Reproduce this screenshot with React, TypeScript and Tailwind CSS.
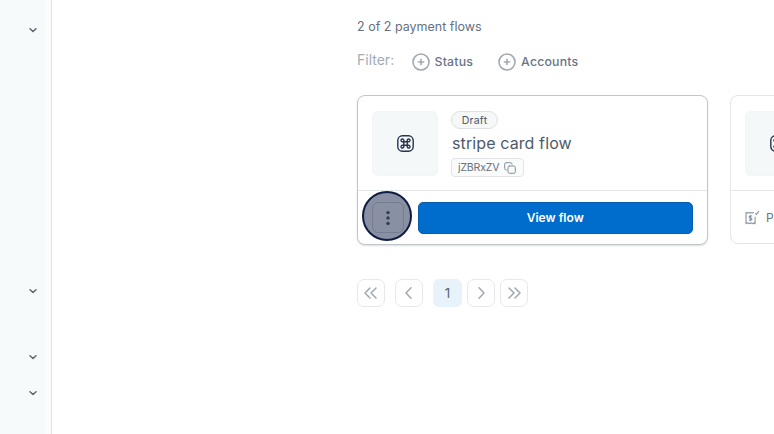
import type { ReactNode } from "react";

const stroke = {
  fill: "none",
  stroke: "currentColor",
  strokeLinecap: "round" as const,
  strokeLinejoin: "round" as const,
};

function SideChevron() {
  return (
    <svg className="block h-3 w-3 text-[#5d646b]" viewBox="0 0 12 12" {...stroke} strokeWidth={1.5}>
      <path d="M3 4.8 6 7.5 9 4.8" />
    </svg>
  );
}

function Sidebar() {
  return (
    <aside className="flex w-[52px] shrink-0 border-r border-[#dde3e6] bg-[#fbfdfd]">
      <nav className="flex w-[45px] flex-col items-end bg-[#f6fafb] pt-6 pr-[6px]">
        <SideChevron />
        <div className="mt-[249px]"><SideChevron /></div>
        <div className="mt-[54px]"><SideChevron /></div>
        <div className="mt-6"><SideChevron /></div>
      </nav>
    </aside>
  );
}

function FilterButton({ children }: { children: ReactNode }) {
  return (
    <button className="flex items-center gap-1 text-[12.3px] leading-5 font-medium tracking-[0.2px] text-[#6a7584]">
      <svg className="h-5 w-5 text-[#a2a9b1]" viewBox="0 0 20 20" {...stroke}>
        <circle cx="10" cy="10" r="8" strokeWidth={1.6} />
        <path d="M7.4 10h5.2M10 7.4v5.2" strokeWidth={1.6} />
      </svg>
      {children}
    </button>
  );
}

function FlowTile() {
  return (
    <div className="flex h-[65px] w-[66px] shrink-0 items-center justify-center rounded-md border border-[#f3f6f6] bg-[#f5f8f8]">
      <svg className="h-[17px] w-[17px] text-[#26344f]" viewBox="0 0 17 17" {...stroke} strokeWidth={1.4}>
        <rect x="0.8" y="0.8" width="15.4" height="15.4" rx="4.6" />
        <path d="M6.8 6.8V5.5a1.4 1.4 0 1 0-1.4 1.3h6.2a1.4 1.4 0 1 0-1.4-1.3v6a1.4 1.4 0 1 0 1.4-1.3H5.4a1.4 1.4 0 1 0 1.4 1.3z" />
      </svg>
    </div>
  );
}

function CopyIcon() {
  return (
    <svg className="h-3 w-3 text-[#858f99]" viewBox="0 0 12 12" {...stroke} strokeWidth={1}>
      <rect x="4" y="4" width="7.3" height="7.3" rx="1.5" />
      <path d="M2.3 8H2A1.4 1.4 0 0 1 .7 6.6V2A1.4 1.4 0 0 1 2 .7h4.6A1.4 1.4 0 0 1 8 2v.3" />
    </svg>
  );
}

function InvoiceIcon() {
  return (
    <svg className="h-[15px] w-[15px] shrink-0 text-[#8b95a3]" viewBox="0 0 15 15" {...stroke} strokeWidth={1.1}>
      <path d="M8.5 2.5 7.2 3.1 6 2.5l-1.3.6-1.2-.6-1.2.6L1 2.5v11.3l1.6-1 1.6 1 1.6-1 1.6 1 1.6-1 1.1 1V7" />
      <path d="M10.6 3.5 11.4 4.4l2.3-3" />
      <path d="M6.8 6H5.2a1 1 0 0 0 0 2h.7a1 1 0 0 1 0 2.1H4.3M5.5 5.3v5.4" />
    </svg>
  );
}

function ActiveCard() {
  return (
    <article className="h-[150px] w-[351px] shrink-0 rounded-lg border border-[#c2c7ca] bg-white shadow-[0_1px_2px_rgba(0,0,0,0.14)]">
      <div className="flex h-[95px] border-b border-[#e5e8ea] pt-[15px] pl-[14px]">
        <FlowTile />
        <div className="ml-[13px] flex flex-col items-start">
          <span className="flex h-[18px] w-[47px] items-center justify-center rounded-full border border-[#dde1e4] bg-[#f6f8f8] pt-px text-[10.5px] tracking-[0.25px] text-[#4b5563]">
            Draft
          </span>
          <h2 className="mt-[2px] ml-px text-[16px] leading-6 whitespace-nowrap text-[#4d5a6a] tracking-[0.11px]">stripe card flow</h2>
          <span className="mt-[3px] flex h-[19px] w-[73px] items-center justify-between rounded-[4px] border border-[#e1e5e7] bg-[#fafbfb] pr-[7px] pl-[6px] text-[10.5px] tracking-[-0.15px] text-[#657180]">
            jZBRxZV
            <CopyIcon />
          </span>
        </div>
      </div>
      <div className="relative flex h-[53px] items-center pr-[14px] pl-[14px]">
        <button aria-label="More actions" className="flex h-[31px] w-[32px] items-center justify-center rounded-md border border-[#d5d9dc]">
          <svg className="h-4 w-4 fill-[#46536b]" viewBox="0 0 16 16">
            <circle cx="8" cy="2.6" r="1.7" />
            <circle cx="8" cy="8" r="1.7" />
            <circle cx="8" cy="13.4" r="1.7" />
          </svg>
        </button>
        <button className="ml-[13.5px] h-8 flex-1 rounded-[5px] border border-[#095cae] bg-[#006dcc] text-[12px] font-semibold text-white tracking-[0.02px]">
          View flow
        </button>
        <span className="pointer-events-none absolute top-0 left-1 h-[50px] w-[50px] rounded-full border-2 border-[#101d42] bg-[#132247]/50" />
      </div>
    </article>
  );
}

function PartialCard() {
  return (
    <article className="h-[149px] w-[351px] shrink-0 rounded-lg border border-[#e3e6e8] bg-white">
      <div className="flex h-[95px] border-b border-[#e5e8ea] pt-[15px] pl-[14px]">
        <FlowTile />
      </div>
      <div className="flex h-[53px] items-center gap-[6px] pl-[14px] text-[12px] text-[#6b7582]">
        <InvoiceIcon />
        P
      </div>
    </article>
  );
}

function PageButton({ label, d }: { label: string; d: string }) {
  return (
    <button aria-label={label} className="flex h-7 w-7 items-center justify-center rounded-[7px] border border-[#e6e9eb] bg-white">
      <svg className="h-4 w-4 shrink-0 text-[#a0a7ae]" viewBox="0 0 16 16" {...stroke} strokeWidth={1.5}>
        <path d={d} />
      </svg>
    </button>
  );
}

export default function App() {
  return (
    <div className="flex h-[434px] w-[774px] overflow-hidden bg-white font-['Inter','Liberation_Sans',sans-serif]">
      <Sidebar />
      <main className="min-w-0 flex-1 overflow-hidden pt-[17px] pl-[305px]">
        <p className="text-[12.5px] leading-5 text-[#657080]">2 of 2 payment flows</p>
        <div className="mt-[15px] flex h-5 items-center">
          <span className="w-[53.5px] -translate-y-[2px] text-[14px] leading-5 text-[#a3acb5]">Filter:</span>
          <FilterButton>Status</FilterButton>
          <span className="w-6" />
          <FilterButton>Accounts</FilterButton>
        </div>
        <section className="mt-[23px] flex gap-[22px]">
          <ActiveCard />
          <PartialCard />
        </section>
        <nav className="mt-[34px] flex items-center">
          <PageButton label="First page" d="M7 3 2 8l5 5M13 3 8 8l5 5" />
          <span className="w-[10px]" />
          <PageButton label="Previous page" d="M10 2.8 5 8l5 5.2" />
          <button className="mr-[5px] ml-[10px] h-7 w-[29px] rounded-md bg-[#e8f2fa] text-[13.5px] text-[#5b6674]">1</button>
          <PageButton label="Next page" d="M6 2.8 11 8l-5 5.2" />
          <span className="w-[5px]" />
          <PageButton label="Last page" d="M3 3l5 5-5 5M9 3l5 5-5 5" />
        </nav>
      </main>
    </div>
  );
}
